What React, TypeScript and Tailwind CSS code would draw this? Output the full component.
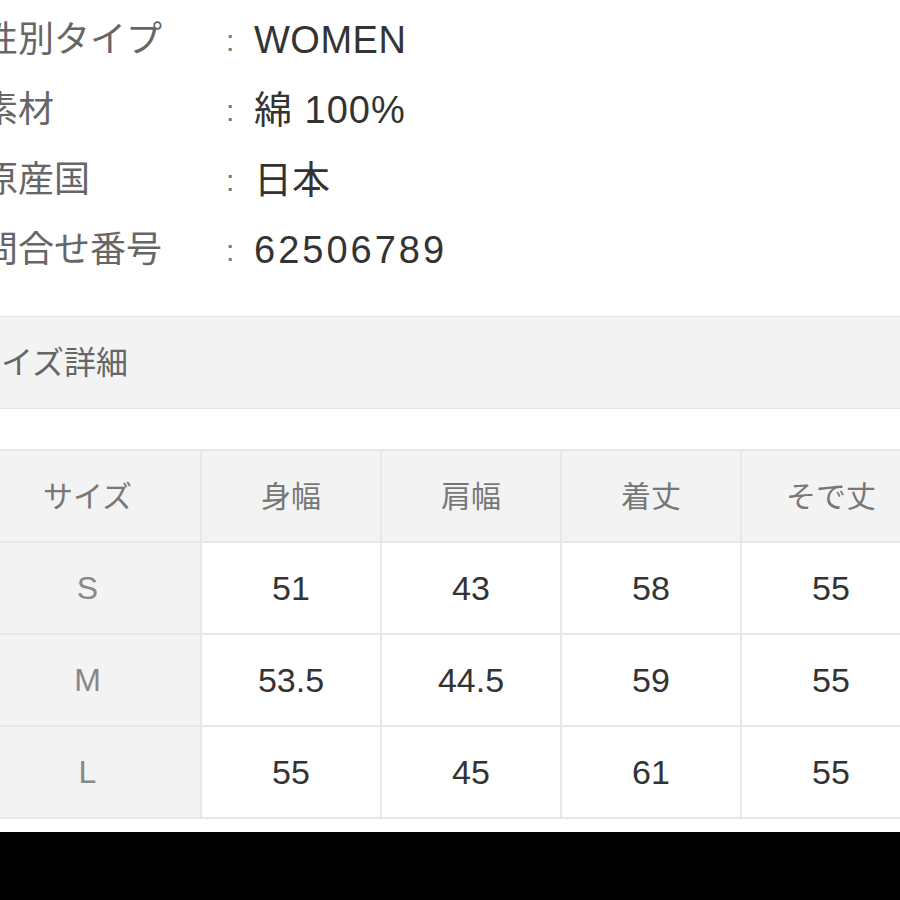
import React from "react";

const specs = [
  { label: "性別タイプ", value: "WOMEN", track: "tracking-[0.5px]" },
  { label: "素材", value: "綿 100%", track: "tracking-[1px]" },
  { label: "原産国", value: "日本", track: "" },
  { label: "問合せ番号", value: "62506789", track: "tracking-[3px]" },
];

const headers = ["サイズ", "身幅", "肩幅", "着丈", "そで丈"];

const rows = [
  { size: "S", values: ["51", "43", "58", "55"] },
  { size: "M", values: ["53.5", "44.5", "59", "55"] },
  { size: "L", values: ["55", "45", "61", "55"] },
];

const App = () => {
  return (
    <div
      className="w-[900px] h-[900px] bg-white overflow-hidden flex flex-col"
      style={{ fontFamily: '"Liberation Sans", "Noto Sans CJK JP", sans-serif' }}
    >
      {/* Spec list */}
      <div className="pt-[5px]">
        {specs.map((item) => (
          <div key={item.label} className="h-[70px] flex items-center">
            <div className="w-[244px] ml-[-18px] shrink-0 text-[36px] text-[#666666] whitespace-nowrap">
              {item.label}
            </div>
            <div className="w-[28px] shrink-0 text-[30px] text-[#777777]">:</div>
            <div className={`text-[38px] text-[#333333] whitespace-nowrap ${item.track}`}>
              {item.value}
            </div>
          </div>
        ))}
      </div>

      {/* Section header */}
      <div className="mt-[31px] h-[93px] bg-[#f3f3f3] border-y border-[#e4e4e4] flex items-center">
        <span className="ml-[-31px] text-[32px] text-[#666666] whitespace-nowrap">
          サイズ詳細
        </span>
      </div>

      {/* Size table */}
      <div className="mt-[40px] ml-[-25px] w-[947px] bg-[#e7e7e7] py-[2px] grid grid-cols-[225px_178px_178px_178px_178px] gap-[2px]">
        {headers.map((h) => (
          <div
            key={h}
            className="h-[90px] bg-[#f3f3f3] flex items-center justify-center text-[30px] text-[#777777]"
          >
            {h}
          </div>
        ))}
        {rows.map((row) => (
          <React.Fragment key={row.size}>
            <div className="h-[90px] bg-[#f3f3f3] flex items-center justify-center text-[32px] text-[#888888]">
              {row.size}
            </div>
            {row.values.map((v, i) => (
              <div
                key={`${row.size}-${i}`}
                className="h-[90px] bg-white flex items-center justify-center text-[34px] text-[#333333]"
              >
                {v}
              </div>
            ))}
          </React.Fragment>
        ))}
      </div>

      <div className="mt-[13px] flex-1 bg-black"></div>
    </div>
  );
};

export default App;
